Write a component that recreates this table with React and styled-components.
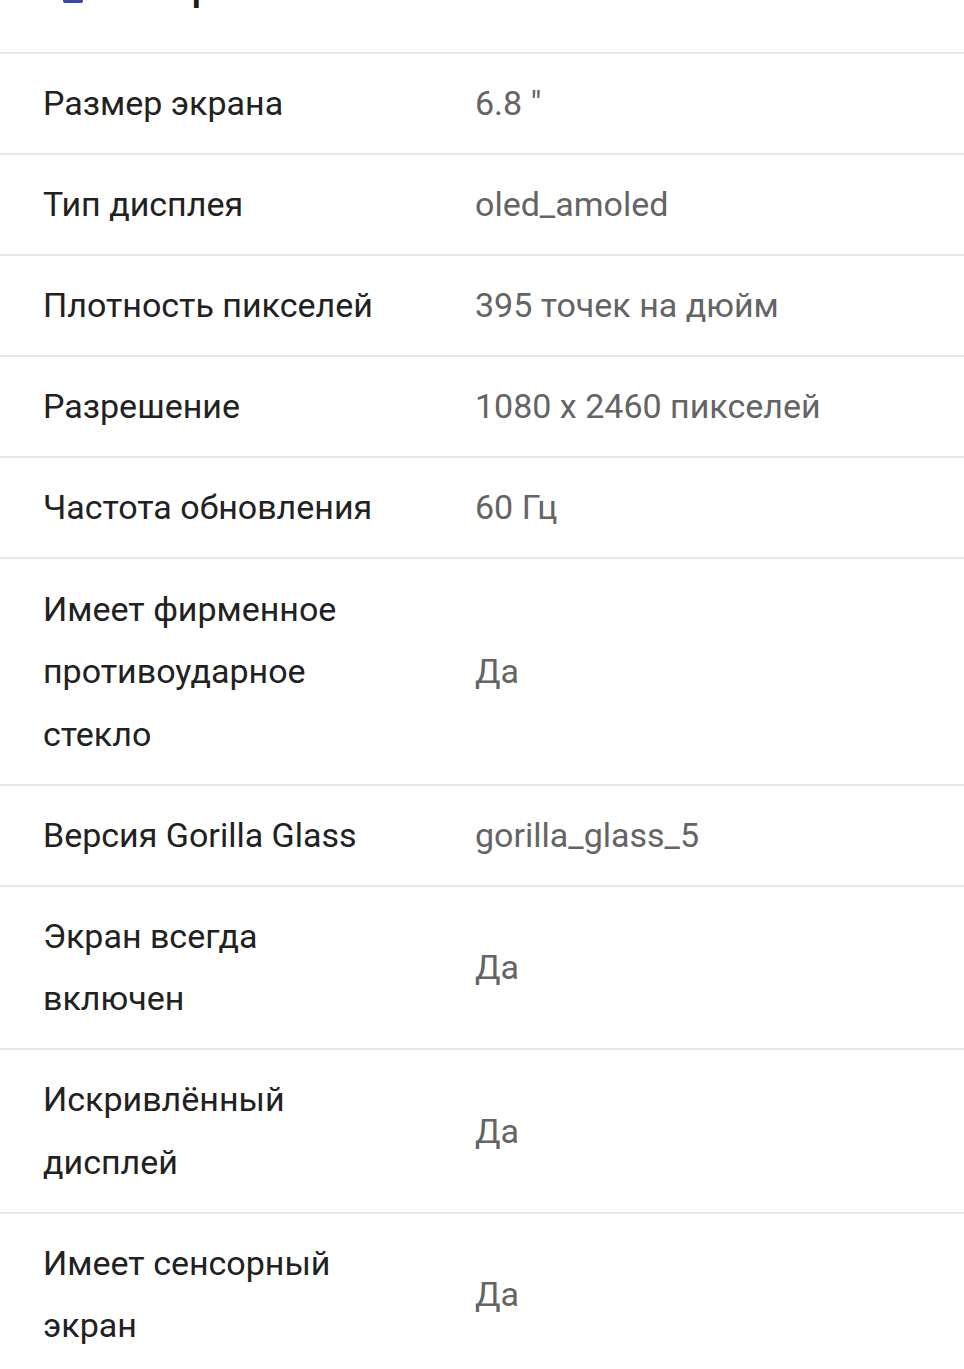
import React from "react"
import styled, { createGlobalStyle } from "styled-components"

const GlobalStyle = createGlobalStyle`
  html, body {
    margin: 0;
    padding: 0;
    background: #ffffff;
  }

  body {
    font-family: Roboto, "Noto Sans", "Liberation Sans", sans-serif;
    -webkit-font-smoothing: antialiased;
  }
`

const Page = styled.div`
  width: 964px;
  background: #ffffff;
`

// the section header is scrolled mostly out of view
const Header = styled.div`
  display: flex;
  align-items: flex-start;
  height: 52px;
  overflow: hidden;
  border-bottom: 2px solid #e8e8e8;
`

Header.Icon = styled.div`
  flex: none;
  width: 20px;
  height: 20px;
  margin-top: -17px;
  margin-left: 63px;
  border-radius: 2px;
  background: #3949ab;
`

Header.Title = styled.h2`
  margin: -33px 0 0 60px;
  font-size: 40px;
  line-height: 40px;
  font-weight: 500;
  color: #1c1c1c;
`

const Table = styled.div`
  display: flex;
  flex-direction: column;
`

const Row = styled.div`
  display: grid;
  grid-template-columns: 432px 1fr;
  align-items: center;
  padding: 18.1px 0 18.5px 43px;
  border-bottom: 2px solid #e8e8e8;

  &:last-child {
    border-bottom: none;
  }
`

Row.Label = styled.div`
  max-width: 345px;
  font-size: 34px;
  line-height: 62.5px;
  color: #212121;
`

Row.Value = styled.div`
  font-size: 34px;
  line-height: 62.5px;
  color: #646464;
`

const specs = [
  { label: "Размер экрана", value: "6.8 \"" },
  { label: "Тип дисплея", value: "oled_amoled" },
  { label: "Плотность пикселей", value: "395 точек на дюйм" },
  { label: "Разрешение", value: "1080 x 2460 пикселей" },
  { label: "Частота обновления", value: "60 Гц" },
  { label: "Имеет фирменное противоударное стекло", value: "Да" },
  { label: "Версия Gorilla Glass", value: "gorilla_glass_5" },
  { label: "Экран всегда включен", value: "Да" },
  { label: "Искривлённый дисплей", value: "Да" },
  { label: "Имеет сенсорный экран", value: "Да" },
]

const App = () => {
  return (
    <React.Fragment>
      <GlobalStyle />
      <Page>
        <Header>
          <Header.Icon />
          <Header.Title>Экран</Header.Title>
        </Header>
        <Table>
          {specs.map((spec) => (
            <Row key={spec.label}>
              <Row.Label>{spec.label}</Row.Label>
              <Row.Value>{spec.value}</Row.Value>
            </Row>
          ))}
        </Table>
      </Page>
    </React.Fragment>
  )
}

export default App
